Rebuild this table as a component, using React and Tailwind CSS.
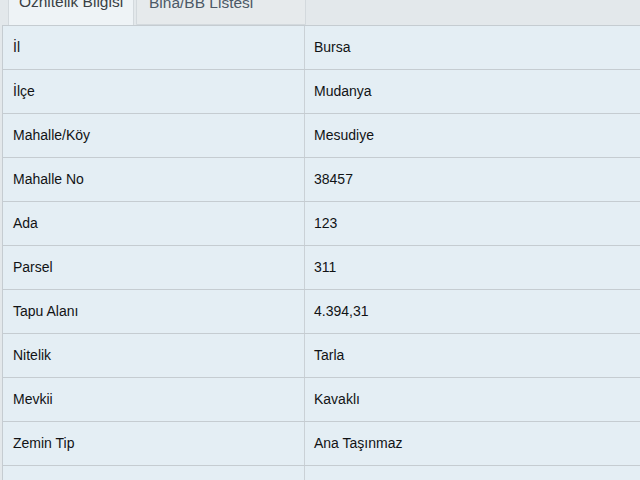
const rows = [
  ["İl", "Bursa"],
  ["İlçe", "Mudanya"],
  ["Mahalle/Köy", "Mesudiye"],
  ["Mahalle No", "38457"],
  ["Ada", "123"],
  ["Parsel", "311"],
  ["Tapu Alanı", "4.394,31"],
  ["Nitelik", "Tarla"],
  ["Mevkii", "Kavaklı"],
  ["Zemin Tip", "Ana Taşınmaz"],
  ["", ""],
];

export default function App() {
  return (
    <div
      className="w-[640px] h-[480px] overflow-hidden bg-[#e3e8eb]"
      style={{ fontFamily: '"Liberation Sans", Arial, sans-serif' }}
    >
      <div className="-mt-[14px]">
        <div className="flex items-end h-[39px] pl-[8px] gap-[2px]">
          <div className="h-[39px] w-[126px] bg-[#eef3f6] border border-b-0 border-[#d3d9dd] rounded-t-[3px] flex justify-center pt-[3px] text-[15.5px] text-[#3a3f44]">
            Öznitelik Bilgisi
          </div>
          <div className="h-[37px] w-[170px] bg-[#e6eaec] border border-[#d3d9dd] rounded-t-[3px] flex pl-[12px] pt-[2px] text-[15.5px] text-[#4c5966]">
            Bina/BB Listesi
          </div>
        </div>
        <div className="ml-[2px] border-l border-t border-[#c5ccd1] bg-[#e4eef4]">
          {rows.map(([label, value], i) => (
            <div
              key={i}
              className="grid grid-cols-[302px_1fr] h-[44px] border-b border-[#c5ccd1] text-[14px] text-[#111315]"
            >
              <div className="flex items-center pl-[10px] border-r border-[#cad1d6]">
                {label}
              </div>
              <div className="flex items-center pl-[9px]">{value}</div>
            </div>
          ))}
        </div>
      </div>
    </div>
  );
}
